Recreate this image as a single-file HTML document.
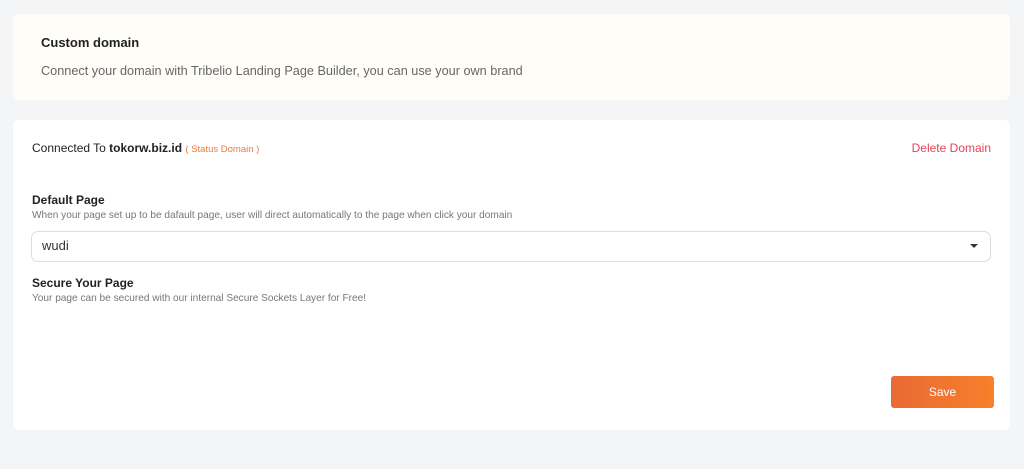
<!DOCTYPE html>
<html><head><style>
body{margin:0;width:1024px;height:469px;background:#f4f5f7;font-family:"Liberation Sans",sans-serif;position:relative;overflow:hidden}
.c1{position:absolute;left:13px;top:14px;width:997px;height:86px;background:#fffdf7;border-radius:6px}
.c2{position:absolute;left:13px;top:120px;width:997px;height:310px;background:#fff;border-radius:6px}
.t{position:absolute;white-space:nowrap}
</style></head><body>
<div class="c1">
<div class="t" style="left:28px;top:21px;font-size:13px;font-weight:bold;color:#222">Custom domain</div>
<div class="t" style="left:28px;top:50px;font-size:12.7px;color:#666">Connect your domain with Tribelio Landing Page Builder, you can use your own brand</div>
</div>
<div class="c2">
<div class="t" style="left:19px;top:21px;font-size:12px;color:#222">Connected To <b>tokorw.biz.id</b> <span style="font-size:9.5px;color:#f07a3a">( Status Domain )</span></div>
<div class="t" style="right:19px;top:21px;font-size:12px;color:#e8435a">Delete Domain</div>
<div class="t" style="left:19px;top:73px;font-size:12px;font-weight:bold;color:#222">Default Page</div>
<div class="t" style="left:19px;top:90px;font-size:10.1px;color:#777">When your page set up to be dafault page, user will direct automatically to the page when click your domain</div>
<div style="position:absolute;left:18px;top:111px;width:958px;height:29px;border:1px solid #ddd;border-radius:7px"></div>
<div class="t" style="left:29px;top:118px;font-size:13px;color:#333">wudi</div>
<div style="position:absolute;left:957px;top:124px;width:0;height:0;border-left:4px solid transparent;border-right:4px solid transparent;border-top:4px solid #333"></div>
<div class="t" style="left:19px;top:156px;font-size:12px;font-weight:bold;color:#222">Secure Your Page</div>
<div class="t" style="left:19px;top:173px;font-size:10.1px;color:#777">Your page can be secured with our internal Secure Sockets Layer for Free!</div>
<div style="position:absolute;left:878px;top:256px;width:103px;height:32px;border-radius:3px;background:linear-gradient(90deg,#e96a35,#f7802a);color:#fff;font-size:12px;text-align:center;line-height:32px">Save</div>
</div>
</body></html>
